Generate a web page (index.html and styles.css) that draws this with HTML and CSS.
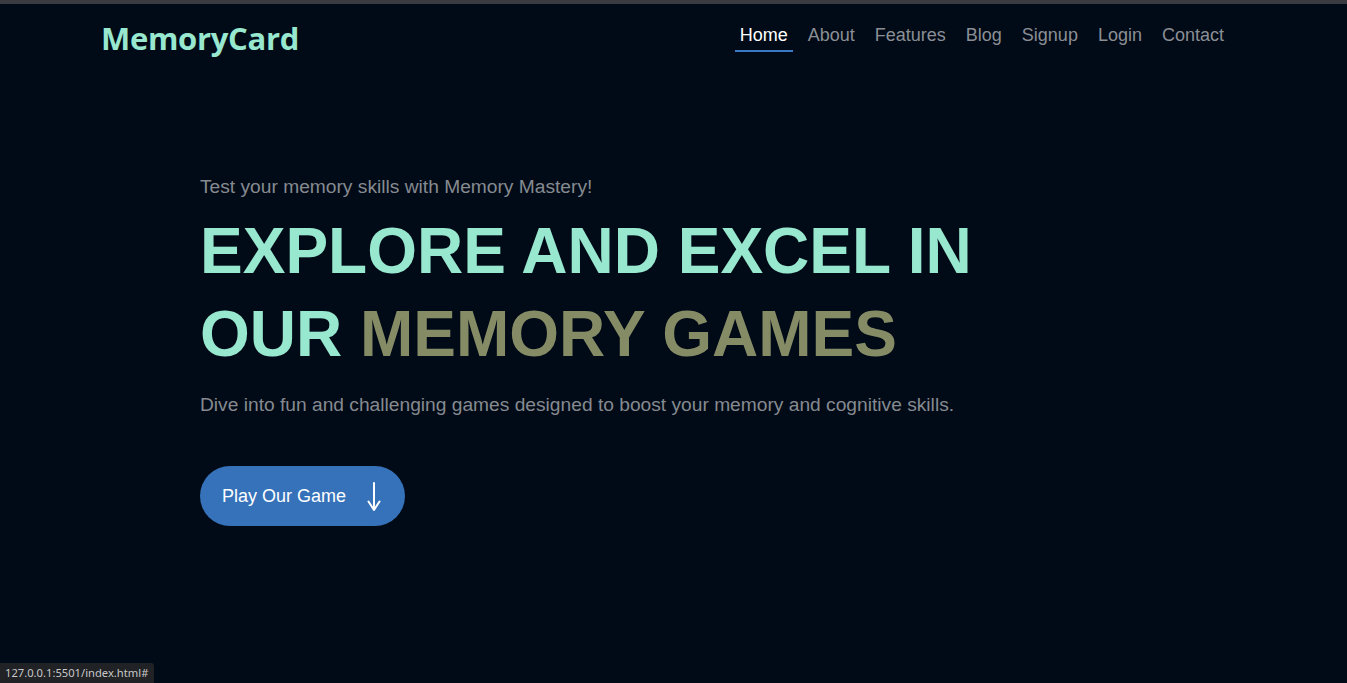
FILE: index.html
```html
<!DOCTYPE html>
<html lang="en">
<head>
<meta charset="utf-8">
<title>MemoryCard</title>
<link rel="stylesheet" href="styles.css">
</head>
<body>
<div class="topstrip"></div>
<header class="header">
  <a class="logo" href="#">MemoryCard</a>
  <nav class="nav">
    <a class="nav-link active" href="#">Home</a>
    <a class="nav-link" href="#">About</a>
    <a class="nav-link" href="#">Features</a>
    <a class="nav-link" href="#">Blog</a>
    <a class="nav-link" href="#">Signup</a>
    <a class="nav-link" href="#">Login</a>
    <a class="nav-link" href="#">Contact</a>
  </nav>
</header>
<main class="hero">
  <p class="eyebrow">Test your memory skills with Memory Mastery!</p>
  <h1 class="title">EXPLORE AND EXCEL IN<br>OUR <span class="accent">MEMORY GAMES</span></h1>
  <p class="lead">Dive into fun and challenging games designed to boost your memory and cognitive skills.</p>
  <a class="cta" href="#">Play Our Game
    <svg class="arrow" width="14" height="30" viewBox="0 0 14 30" aria-hidden="true">
      <path d="M7 1 V28 M1.5 19.5 L7 28 L12.5 19.5" fill="none" stroke="#ffffff" stroke-width="2" stroke-linecap="round" stroke-linejoin="round"/>
    </svg>
  </a>
</main>
<div class="status">127.0.0.1:5501/index.html#</div>
</body>
</html>
```
FILE: styles.css
```css
* { box-sizing: border-box; }
html, body { margin: 0; padding: 0; height: 100%; }
body {
  background: #010a17;
  font-family: "Liberation Sans", Arial, sans-serif;
  overflow: hidden;
}
a { text-decoration: none; }
.topstrip { height: 4px; background: #3b3c42; }
.header {
  display: flex;
  justify-content: space-between;
  align-items: flex-start;
  padding: 14px 118px 0 101px;
  height: 66px;
}
.logo {
  font-family: "Open Sans", "Noto Sans", sans-serif;
  font-weight: 700;
  font-size: 31px;
  color: #98e8cf;
  letter-spacing: -0.3px;
  line-height: 40px;
}
.nav { display: flex; gap: 10px; padding-top: 6px; }
.nav-link {
  font-size: 18px;
  color: #8b8f95;
  padding: 0 5px 4px;
  line-height: 22px;
  border-bottom: 2px solid transparent;
}
.nav-link.active { color: #ffffff; border-bottom-color: #3a79c4; }
.hero { padding: 106px 0 0 200px; }
.eyebrow {
  margin: 0;
  font-size: 19.2px;
  color: #868a90;
  line-height: 22px;
}
.title {
  margin: 12px 0 0;
  font-size: 64px;
  line-height: 83.2px;
  font-weight: 700;
  color: #98e8cf;
}
.accent { color: #858b65; }
.lead {
  margin: 18px 0 0;
  font-size: 19.2px;
  color: #868a90;
  line-height: 22px;
}
.cta {
  display: inline-flex;
  align-items: center;
  gap: 21px;
  margin-top: 50px;
  height: 60px;
  padding: 0 24px 0 22px;
  border-radius: 30px;
  background: #3572b9;
  color: #ffffff;
  font-size: 18px;
}
.arrow { display: block; margin-top: 2px; }
.status {
  position: fixed;
  left: 0;
  bottom: 0;
  background: #202226;
  color: #c8c8c8;
  font-family: "Noto Sans", "Open Sans", sans-serif;
  font-size: 11.2px;
  line-height: 16px;
  padding: 2px 6px 2px 5px;
  border-top-right-radius: 3px;
}
```
